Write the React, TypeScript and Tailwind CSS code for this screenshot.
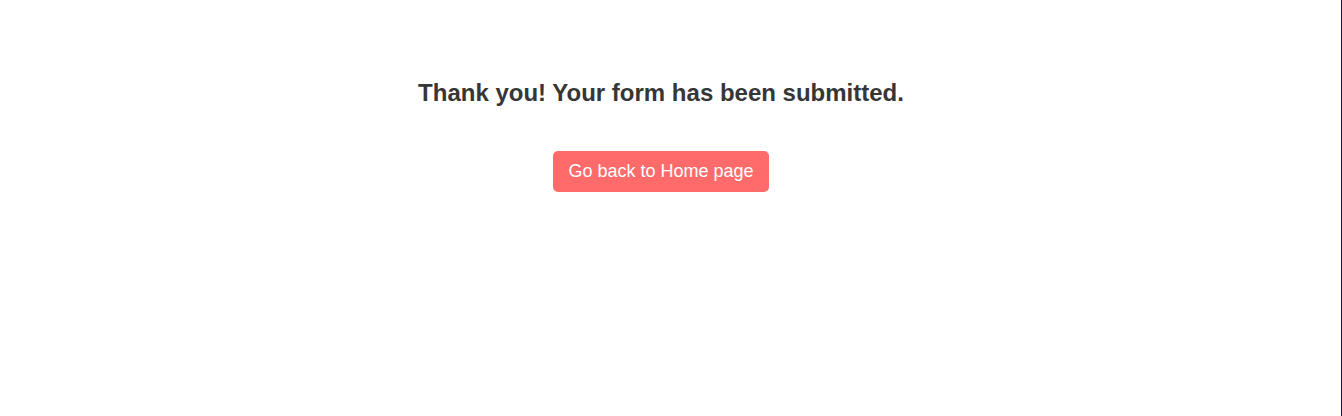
export default function App() {
  return (
    <main className="flex h-[416px] w-full bg-white" style={{ fontFamily: '"Liberation Sans", Arial, sans-serif' }}>
      <div className="flex flex-1 flex-col items-center pr-[19px] pt-[78px]">
        <h1 className="text-[24px] font-bold leading-[30px] text-[#363636]">
          Thank you! Your form has been submitted.
        </h1>
        <button className="mt-[43px] h-[41px] rounded-[5px] bg-[#ff6b6b] px-[15px] text-[18px] text-white">
          Go back to Home page
        </button>
      </div>
      <div className="w-px bg-[#1e1050]" />
    </main>
  );
}
